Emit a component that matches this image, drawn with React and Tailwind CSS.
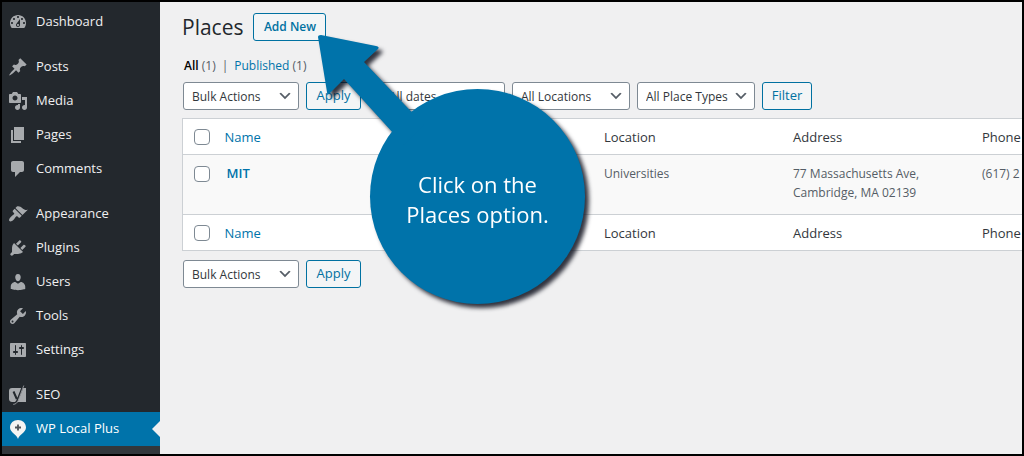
import clsx from "clsx";

const ICONS = {
  dashboard:
    "M3.76 16h12.48c1.1-1.37 1.76-3.11 1.76-5 0-4.42-3.58-8-8-8s-8 3.58-8 8c0 1.89.66 3.63 1.76 5zM10 4c.55 0 1 .45 1 1s-.45 1-1 1-1-.45-1-1 .45-1 1-1zM6 6c.55 0 1 .45 1 1s-.45 1-1 1-1-.45-1-1 .45-1 1-1zm8 0c.55 0 1 .45 1 1s-.45 1-1 1-1-.45-1-1 .45-1 1-1zm-5.37 5.55L12 7v6c0 1.1-.9 2-2 2s-2-.9-2-2c0-.57.24-1.08.63-1.45zM4 10c.55 0 1 .45 1 1s-.45 1-1 1-1-.45-1-1 .45-1 1-1zm12 0c.55 0 1 .45 1 1s-.45 1-1 1-1-.45-1-1 .45-1 1-1zm-5 3c0-.55-.45-1-1-1s-1 .45-1 1 .45 1 1 1 1-.45 1-1z",
  post:
    "M10.44 3.02l1.82-1.82 6.36 6.35-1.83 1.82c-1.05-.68-2.48-.57-3.41.36l-.75.75c-.92.93-1.04 2.35-.35 3.41l-1.83 1.82-2.41-2.41-2.8 2.79c-.42.42-3.38 2.71-3.8 2.29s1.86-3.39 2.28-3.81l2.79-2.79L4.1 9.36l1.83-1.82c1.05.69 2.48.57 3.4-.36l.75-.75c.93-.92 1.05-2.35.36-3.41z",
  media:
    "M13 11V4c0-.55-.45-1-1-1h-1.67L9 1H5L3.67 3H2c-.55 0-1 .45-1 1v7c0 .55.45 1 1 1h10c.55 0 1-.45 1-1zM7 4.5c1.38 0 2.5 1.12 2.5 2.5S8.38 9.5 7 9.5 4.5 8.38 4.5 7 5.62 4.5 7 4.5zM14 6h5v10.5c0 1.38-1.12 2.5-2.5 2.5S14 17.88 14 16.5s1.12-2.5 2.5-2.5c.17 0 .34.02.5.05V9h-3V6zm-4 8.05V13h2v3.5c0 1.38-1.12 2.5-2.5 2.5S7 17.88 7 16.5 8.12 14 9.5 14c.17 0 .34.02.5.05z",
  page: "M6 15V2h10v13H6zm-1 1h8v2H3V5h2v11z",
  comments: "M5 2h9c1.1 0 2 .9 2 2v7c0 1.1-.9 2-2 2h-2l-5 5v-5H5c-1.1 0-2-.9-2-2V4c0-1.1.9-2 2-2z",
  appearance:
    "M14.48 11.06L7.41 3.99l1.5-1.5c.5-.56 2.3-.47 3.51.32 1.21.8 1.43 1.28 2.91 2.1 1.18.64 2.45 1.26 4.45.85zm-.71.71L6.7 4.7 4.93 6.47c-.39.39-.39 1.02 0 1.41l1.06 1.06c.39.39.39 1.03 0 1.42-.6.6-1.43 1.11-2.21 1.69-.35.26-.7.53-1.01.84C1.43 14.23.4 16.08 1.4 17.07c.99 1 2.84-.03 4.18-1.36.31-.31.58-.66.85-1.02.57-.78 1.08-1.61 1.69-2.21.39-.39 1.02-.39 1.41 0l1.06 1.06c.39.39 1.02.39 1.41 0z",
  plugins:
    "M13.11 4.36L9.87 7.6 8 5.73l3.24-3.24c.35-.34 1.05-.2 1.56.32.52.51.66 1.21.31 1.55zm-8 1.77l.91-1.12 9.01 9.01-1.19.84c-.71.71-2.63 1.16-3.82 1.16H6.14L4.9 17.26c-.59.59-1.54.59-2.12 0-.59-.58-.59-1.53 0-2.12l1.24-1.24v-3.88c0-1.13.4-3.19 1.09-3.89zm7.26 3.97l3.24-3.24c.34-.35 1.04-.21 1.55.31.52.51.66 1.21.31 1.55l-3.24 3.25z",
  users:
    "M10 9.25c-2.27 0-2.73-3.44-2.73-3.44C7 4.02 7.82 2 9.97 2c2.16 0 2.98 2.02 2.71 3.81 0 0-.41 3.44-2.68 3.44zm0 2.57L12.72 10c2.39 0 4.52 2.33 4.52 4.53v2.49s-3.65 1.13-7.24 1.13c-3.65 0-7.24-1.13-7.24-1.13v-2.49c0-2.25 1.94-4.48 4.47-4.48z",
  tools:
    "M16.68 9.77c-1.34 1.34-3.3 1.67-4.95.99l-5.41 6.52c-.99.99-2.59.99-3.58 0s-.99-2.59 0-3.57l6.52-5.42c-.68-1.65-.35-3.61.99-4.95 1.28-1.28 3.12-1.62 4.72-1.06l-2.89 2.89 2.82 2.82 2.86-2.87c.53 1.58.18 3.39-1.08 4.65zM3.81 16.21c.4.39 1.04.39 1.43 0 .4-.4.4-1.04 0-1.43-.39-.4-1.03-.4-1.43 0-.39.39-.39 1.03 0 1.43z",
  settings:
    "M18 16V4c0-.55-.45-1-1-1H3c-.55 0-1 .45-1 1v12c0 .55.45 1 1 1h14c.55 0 1-.45 1-1zM8 11h1c.55 0 1 .45 1 1s-.45 1-1 1H8v1.5c0 .28-.22.5-.5.5s-.5-.22-.5-.5V13H6c-.55 0-1-.45-1-1s.45-1 1-1h1V5.5c0-.28.22-.5.5-.5s.5.22.5.5V11zm5-2h-1c-.55 0-1-.45-1-1s.45-1 1-1h1V5.5c0-.28.22-.5.5-.5s.5.22.5.5V7h1c.55 0 1 .45 1 1s-.45 1-1 1h-1v5.5c0 .28-.22.5-.5.5s-.5-.22-.5-.5V9z",
};

const MENU = [
  [{ label: "Dashboard", icon: "dashboard" }],
  [
    { label: "Posts", icon: "post" },
    { label: "Media", icon: "media" },
    { label: "Pages", icon: "page" },
    { label: "Comments", icon: "comments" },
  ],
  [
    { label: "Appearance", icon: "appearance" },
    { label: "Plugins", icon: "plugins" },
    { label: "Users", icon: "users" },
    { label: "Tools", icon: "tools" },
    { label: "Settings", icon: "settings" },
  ],
  [
    { label: "SEO", icon: "seo" },
    { label: "WP Local Plus", icon: "pin", active: true },
  ],
];

function MenuIcon({ name }) {
  if (name === "seo") {
    return (
      <svg viewBox="0 0 20 20" className="h-5 w-5 shrink-0" aria-hidden="true">
        <path d="M4 3h14v14H4c-1.500 0-3-1-3-3V6c0-2 1-3 3-3z" fill="#a7aaad" />
        <path d="M5.500 6.500l3.300 7.500M15 1L9.300 15.500c-.8 2-1.800 3-4 3.200" fill="none" stroke="#23282d" strokeWidth="2" />
        <path d="M15.800 .5L10.200 15.500c-.8 2.200-2.300 3.700-5 3.900" fill="none" stroke="#a7aaad" strokeWidth="0.800" />
      </svg>
    );
  }
  if (name === "pin") {
    return (
      <svg viewBox="0 0 20 20" className="h-5 w-5 shrink-0" aria-hidden="true">
        <path d="M10 20C9 15.500 2 13.500 2 8.500 2 4 5.500 1 10 1s8 3 8 7.500c0 5-7 7-8 11.500z" fill="#f4f4f2" />
        <path d="M10 5.500v6M7 8.500h6" stroke="#4d5358" strokeWidth="1.800" />
      </svg>
    );
  }
  return (
    <svg viewBox="0 0 20 20" className="h-5 w-5 shrink-0 fill-[#a7aaad]" aria-hidden="true">
      <path d={ICONS[name]} />
    </svg>
  );
}

function Sidebar() {
  return (
    <nav className="flex w-[158px] shrink-0 flex-col bg-[#23282d] pt-[3px]">
      <div className="flex flex-col gap-[11px]">
        {MENU.map((group, i) => (
          <ul key={i}>
            {group.map((item) => (
              <li key={item.label}>
                <a
                  href="#"
                  className={clsx(
                    "relative flex h-[34px] items-center gap-2 pl-1.5 text-[13px] text-[#f0f0f1]",
                    item.active && "bg-[#0073aa] text-white"
                  )}
                >
                  <MenuIcon name={item.icon} />
                  {item.label}
                  {item.active && (
                    <span className="absolute top-1/2 right-0 -translate-y-1/2 border-8 border-l-0 border-transparent border-r-[#f0f0f1]" />
                  )}
                </a>
              </li>
            ))}
          </ul>
        ))}
      </div>
      <div className="flex-1 bg-[#32373c]" />
    </nav>
  );
}

function Select({ label, className }) {
  return (
    <div className={clsx("relative", className)}>
      <select
        aria-label={label}
        className="h-7 w-full appearance-none rounded-[3px] border border-[#7e8993] bg-white pt-0.5 pl-2 text-xs text-[#32373c]"
      >
        <option>{label}</option>
      </select>
      <svg viewBox="0 0 20 20" className="pointer-events-none absolute top-1.5 right-1.5 h-4 w-4 fill-[#555d66]" aria-hidden="true">
        <path d="M5 6l5 5 5-5 2 1-7 7-7-7 2-1z" />
      </svg>
    </div>
  );
}

function Button({ children, className }) {
  return (
    <button
      type="button"
      className={clsx("h-7 rounded-[3px] border border-[#0071a1] bg-[#f3f5f6] text-[#0071a1]", className)}
    >
      {children}
    </button>
  );
}

function Checkbox({ label }) {
  return (
    <input
      type="checkbox"
      aria-label={label}
      className="block h-4 w-4 appearance-none rounded-[4px] border border-[#7e8993] bg-white"
    />
  );
}

function HeadingRow() {
  return (
    <tr className="h-9 bg-white text-left text-[13px] text-[#32373c]">
      <td className="pl-[11px]">
        <Checkbox label="Select all" />
      </td>
      <th className="pt-0.5 pl-2 font-normal">
        <a href="#" className="text-[#0073aa]">Name</a>
      </th>
      <th className="pt-0.5 pl-2 font-normal">Location</th>
      <th className="pt-0.5 pl-2 font-normal">Address</th>
      <th className="pt-0.5 pl-2 font-normal">Phone</th>
    </tr>
  );
}

function PlacesTable() {
  return (
    <table className="mt-2 w-full table-fixed border-collapse border border-r-0 border-[#ccd0d4]">
      <colgroup>
        <col className="w-[34px]" />
        <col />
        <col className="w-[189px]" />
        <col className="w-[189px]" />
        <col className="w-12" />
      </colgroup>
      <thead>
        <HeadingRow />
      </thead>
      <tbody>
        <tr className="h-15 border-y border-[#ccd0d4] bg-[#f9f9f9] align-top text-xs leading-[19px] text-[#555d66]">
          <td className="pt-[11px] pl-[11px]">
            <Checkbox label="Select MIT" />
          </td>
          <td className="pt-[9px] pl-2.5">
            <a href="#" className="text-[13px] font-semibold text-[#0073aa]">MIT</a>
          </td>
          <td className="pt-[9px] pl-2">Universities</td>
          <td className="pt-[9px] pl-2">
            77 Massachusetts Ave,
            <br />
            Cambridge, MA 02139
          </td>
          <td className="overflow-hidden pt-[9px] pl-2 whitespace-nowrap">(617) 2</td>
        </tr>
      </tbody>
      <tfoot>
        <HeadingRow />
      </tfoot>
    </table>
  );
}

function Callout() {
  return (
    <div className="pointer-events-none absolute top-[33px] left-[316px] drop-shadow-[4px_4px_2px_rgba(15,18,30,0.85)]">
      <svg viewBox="0 0 110 110" className="absolute top-0 left-0 h-[110px] w-[110px] fill-[#0073aa]" aria-hidden="true">
        <path d="M0 2Q0 0 3 0L58 11Q62 12 60 14L46 27L106 90L86 110L26 44L12 58Q9 61 9 57Z" />
      </svg>
      <div className="mt-[54px] ml-[52px] flex h-[215px] w-[215px] items-center justify-center rounded-full bg-[#0073aa] pt-1 text-center text-[22px] leading-[30px] text-white">
        <p>
          Click on the
          <br />
          Places option.
        </p>
      </div>
    </div>
  );
}

export default function App() {
  return (
    <div className="relative flex min-h-screen overflow-hidden border-2 border-black bg-[#f0f0f1] font-['Open_Sans','Noto_Sans',sans-serif]">
      <Sidebar />
      <main className="min-w-0 flex-1 pt-[11px] pl-[22px]">
        <div className="flex items-center gap-2.5">
          <h1 className="text-[21px] leading-7 text-[#23282d]">Places</h1>
          <Button className="w-[73px] text-xs font-semibold">Add New</Button>
        </div>
        <div className="mt-[17px] flex gap-1.5 pl-0.5 text-xs leading-4 text-[#555d66]">
          <a href="#"><b className="font-semibold text-black">All</b> (1)</a>
          <span>|</span>
          <a href="#"><span className="text-[#0073aa]">Published</span> (1)</a>
        </div>
        <div className="mt-2 flex gap-[7px] pl-px">
          <Select label="Bulk Actions" className="w-[116px]" />
          <Button className="w-[55px] text-[13px]">Apply</Button>
          <Select label="All dates" className="ml-3 w-[125px]" />
          <Select label="All Locations" className="w-[118px]" />
          <Select label="All Place Types" className="w-[118px]" />
          <Button className="w-[50px] text-[13px]">Filter</Button>
        </div>
        <PlacesTable />
        <div className="mt-[9px] flex gap-[7px] pl-px">
          <Select label="Bulk Actions" className="w-[116px]" />
          <Button className="w-[55px] text-[13px]">Apply</Button>
        </div>
      </main>
      <Callout />
    </div>
  );
}
